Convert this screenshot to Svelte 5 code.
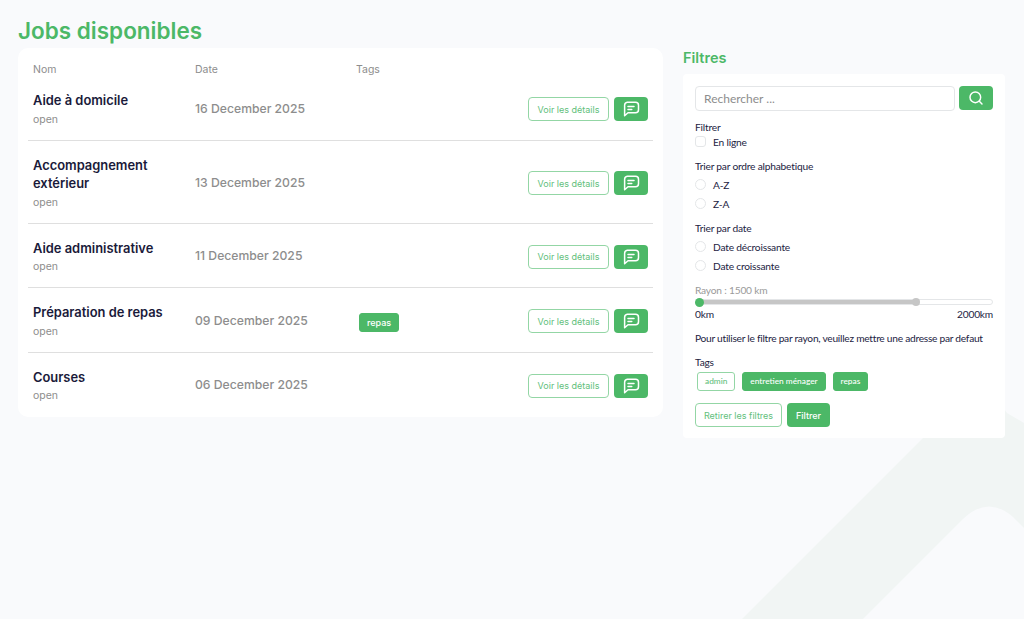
<script>
	const jobs = [
		{ name: "Aide à domicile", date: "16 December 2025", tags: [] },
		{ name: "Accompagnement extérieur", date: "13 December 2025", tags: [] },
		{ name: "Aide administrative", date: "11 December 2025", tags: [] },
		{ name: "Préparation de repas", date: "09 December 2025", tags: ["repas"] },
		{ name: "Courses", date: "06 December 2025", tags: [] }
	];
	const tags = [
		{ label: "admin", active: false },
		{ label: "entretien ménager", active: true },
		{ label: "repas", active: true }
	];
	const radius = 1500;
	const maxRadius = 2000;
	// the thumb stops short of the end of the track
	const percent = (radius / maxRadius) * 98.6;
</script>

<svg class="backdrop" width="1024" height="619" viewBox="0 0 1024 619" aria-hidden="true">
	<path
		d="M742 619 L960 401 Q985 380 1007 413 L1024 423 L1024 528 L1013 517 Q988 495 963 519 L863 619 Z"
	/>
</svg>

<main class="page">
	<section class="jobs">
		<h1>Jobs disponibles</h1>
		<div class="card">
			<div class="row head">
				<span>Nom</span>
				<span>Date</span>
				<span>Tags</span>
			</div>
			{#each jobs as job}
				<div class="row job">
					<div class="title">
						<h3>{job.name}</h3>
						<p>open</p>
					</div>
					<div class="date">{job.date}</div>
					<div class="job-tags">
						{#each job.tags as tag}
							<span class="pill">{tag}</span>
						{/each}
					</div>
					<div class="controls">
						<button class="outline">Voir les détails</button>
						<button class="solid chat" aria-label="Message">
							<svg width="18" height="18" viewBox="0 0 24 24" fill="none" stroke="currentColor" stroke-width="2" stroke-linecap="round" stroke-linejoin="round">
								<path d="M7 3h11a4 4 0 0 1 4 4v6a4 4 0 0 1-4 4H8l-4.500 4V7a4 4 0 0 1 3.500-4z" />
								<path d="M8 8.500h8M8 12.500h5" />
							</svg>
						</button>
					</div>
				</div>
			{/each}
		</div>
	</section>

	<aside class="filters">
		<h2>Filtres</h2>
		<div class="panel">
			<div class="search">
				<input type="text" placeholder="Rechercher ..." />
				<button class="solid" aria-label="Rechercher">
					<svg width="16" height="16" viewBox="0 0 24 24" fill="none" stroke="currentColor" stroke-width="2.200" stroke-linecap="round">
						<circle cx="11" cy="11" r="8" />
						<path d="M17 17l4 4" />
					</svg>
				</button>
			</div>

			<div class="group first">
				<div class="label">Filtrer</div>
				<label class="option tight"><span class="box"></span>En ligne</label>
			</div>

			<div class="group">
				<div class="label">Trier par ordre alphabetique</div>
				<label class="option"><span class="box round"></span>A-Z</label>
				<label class="option"><span class="box round"></span>Z-A</label>
			</div>

			<div class="group">
				<div class="label">Trier par date</div>
				<label class="option"><span class="box round"></span>Date décroissante</label>
				<label class="option"><span class="box round"></span>Date croissante</label>
			</div>

			<div class="range">
				<div class="range-label">Rayon : {radius} km</div>
				<div class="track">
					<div class="fill" style="width: {percent}%"></div>
					<span class="thumb start"></span>
					<span class="thumb end" style="left: {percent}%"></span>
				</div>
				<div class="bounds">
					<span>0km</span>
					<span>{maxRadius}km</span>
				</div>
			</div>

			<p class="note">Pour utiliser le filtre par rayon, veuillez mettre une adresse par defaut</p>

			<div class="label">Tags</div>
			<div class="tags">
				{#each tags as tag}
					<span class="pill" class:ghost={!tag.active}>{tag.label}</span>
				{/each}
			</div>

			<div class="actions">
				<button class="outline big">Retirer les filtres</button>
				<button class="solid big">Filtrer</button>
			</div>
		</div>
	</aside>
</main>

<style>
	:global(body) {
		background: #f9fafc;
		color: #23233f;
		font-family: "Lato", sans-serif;
	}

	.backdrop {
		left: 0;
		position: absolute;
		top: 0;
	}

	.backdrop path {
		fill: #f1f5f4;
	}

	.page {
		box-sizing: border-box;
		display: flex;
		gap: 20px;
		height: 619px;
		overflow: hidden;
		padding: 18px 19px 0 18px;
		position: relative;
	}

	h1 {
		color: #4cb867;
		font-family: "Inter", sans-serif;
		font-size: 22.500px;
		font-weight: 600;
		line-height: 26px;
		margin: 0 0 4px;
	}

	h2 {
		color: #4cb867;
		font-family: "Inter", sans-serif;
		font-size: 14.500px;
		font-weight: 600;
		line-height: 20px;
		margin: 30px 0 6px;
	}

	h3 {
		color: #1a1a3a;
		font-family: "Inter", sans-serif;
		font-size: 12.900px;
		font-weight: 600;
		line-height: 18.500px;
		margin: 0;
	}

	p {
		margin: 0;
	}

	button {
		border-radius: 4px;
		cursor: pointer;
		font-family: "Inter", sans-serif;
	}

	.jobs {
		flex: 0 0 645px;
	}

	.card {
		background: #fff;
		border-radius: 10px;
		padding: 0 10px;
	}

	.row {
		display: grid;
		grid-template-columns: 162px 161px 1fr auto;
		padding: 0 5px;
	}

	.head {
		align-items: end;
		box-sizing: border-box;
		color: #8d8d8d;
		font-family: "Inter", sans-serif;
		font-size: 10.500px;
		height: 28px;
	}

	.job {
		align-items: center;
		border-bottom: 1px solid #dfdfdf;
		padding-bottom: 12px;
		padding-top: 15px;
	}

	.job:last-child {
		border-bottom: none;
		padding-bottom: 13px;
	}

	.title {
		margin-bottom: -1px;
		margin-top: 1px;
		padding-right: 10px;
	}

	.title p {
		color: #8d8d8d;
		font-family: "Inter", sans-serif;
		font-size: 10.500px;
		line-height: 18px;
	}

	.date {
		color: #8d8d8d;
		font-family: "Inter", sans-serif;
		font-size: 12.200px;
		font-weight: 500;
		margin-bottom: 2px;
	}

	.controls {
		display: flex;
		gap: 5px;
	}

	.outline {
		background: #fff;
		border: 1px solid #93d6a5;
		color: #62c07c;
		font-size: 9px;
		height: 24px;
		padding: 0;
		width: 81px;
	}

	.solid {
		background: #4cb867;
		border: none;
		color: #fff;
	}

	.chat {
		align-items: center;
		display: flex;
		height: 24px;
		justify-content: center;
		padding: 0;
		width: 34px;
	}

	.pill {
		background: #4cb867;
		border: 1px solid #4cb867;
		border-radius: 3px;
		color: #fff;
		display: inline-block;
		font-family: "Inter", sans-serif;
		font-size: 9px;
		font-weight: 500;
		line-height: 17px;
		padding: 0 7px;
	}

	.job-tags .pill {
		margin-left: 3px;
	}

	.ghost {
		background: #fff;
		border-color: #93d6a5;
		color: #62c07c;
	}

	.filters {
		flex: 0 0 322px;
	}

	.panel {
		background: #fff;
		border-radius: 4px;
		box-sizing: border-box;
		font-size: 10.200px;
		height: 364px;
		letter-spacing: -0.200px;
		padding: 12px 12px 0;
	}

	.search {
		display: flex;
		gap: 4px;
	}

	.search input {
		border: 1px solid #e4e6e8;
		border-radius: 4px;
		box-sizing: border-box;
		color: #1a1a3a;
		flex: 1;
		font-family: "Lato", sans-serif;
		font-size: 12px;
		height: 25px;
		min-width: 0;
		padding: 0 8px;
	}

	.search input::placeholder {
		color: #8d8d8d;
	}

	.search button {
		align-items: center;
		display: flex;
		flex: 0 0 34px;
		height: 24px;
		justify-content: center;
		padding: 0;
	}

	.group {
		margin-top: 8px;
	}

	.group.first {
		margin-top: 9px;
	}

	.label {
		line-height: 14px;
	}

	.option {
		align-items: center;
		display: flex;
		gap: 7px;
		height: 19px;
	}

	.group .label + .option {
		margin-top: 2px;
	}

	.group .label + .option.tight {
		height: 15px;
		margin-bottom: 10px;
		margin-top: 0;
	}

	.box {
		border: 1px solid #e4e6e8;
		border-radius: 3px;
		box-sizing: border-box;
		height: 11px;
		width: 11px;
	}

	.box.round {
		border-radius: 50%;
	}

	.range {
		margin-top: 8px;
	}

	.range-label {
		color: #9a9a9a;
		line-height: 14px;
	}

	.track {
		background: #fff;
		border: 1px solid #e4e6e8;
		border-radius: 3px;
		box-sizing: border-box;
		height: 6px;
		margin: 2px 0 0 4px;
		position: relative;
	}

	.fill {
		background: #c6c6c6;
		height: 100%;
	}

	.thumb {
		background: #c6c6c6;
		border-radius: 50%;
		height: 8px;
		position: absolute;
		top: -2px;
		transform: translateX(-4px);
		width: 8px;
	}

	.thumb.start {
		background: #4cb867;
		height: 9px;
		left: -1px;
		top: -2.500px;
		width: 9px;
	}

	.bounds {
		display: flex;
		justify-content: space-between;
		line-height: 14px;
		margin-top: 2px;
	}

	.note {
		letter-spacing: -0.260px;
		line-height: 14px;
		margin: 10px 0;
		white-space: nowrap;
	}

	.tags {
		display: flex;
		gap: 7px;
		margin: 3px 0 0 2px;
	}

	.tags .pill {
		font-family: "Lato", sans-serif;
		font-size: 8.300px;
		letter-spacing: 0;
	}

	.actions {
		display: flex;
		gap: 5px;
		margin-top: 12px;
	}

	.big {
		height: 24px;
		letter-spacing: 0;
	}

	.outline.big {
		width: 87px;
	}

	.solid.big {
		font-size: 9px;
		font-weight: 500;
		width: 43px;
	}
</style>
